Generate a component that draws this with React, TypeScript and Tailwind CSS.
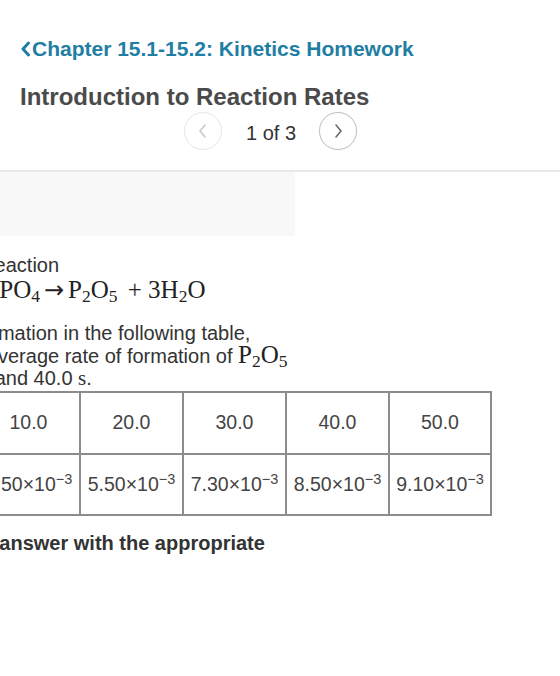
import React from "react";

function BackChevron() {
  return (
    <svg width="11" height="16" viewBox="0 0 11 16" className="shrink-0">
      <path d="M8.5 2 L3 8 L8.5 14" fill="none" stroke="#1f7ea3" strokeWidth="3" strokeLinecap="round" strokeLinejoin="round" />
    </svg>
  );
}

function PagerButton({ dir, active }: { dir: "prev" | "next"; active: boolean }) {
  const d = dir === "prev" ? "M11 5 L6 11 L11 17" : "M7 5 L12 11 L7 17";
  return (
    <div
      className={
        active
          ? "w-[38px] h-[38px] rounded-full border-[1.5px] border-[#c4c4c4] flex items-center justify-center bg-white shadow-[0_0_1px_rgba(0,0,0,0.15)]"
          : "w-[38px] h-[38px] rounded-full border-[1.5px] border-[#e6e6e6] flex items-center justify-center bg-white"
      }
    >
      <svg width="18" height="22" viewBox="0 0 18 22">
        <path d={d} fill="none" stroke={active ? "#6a6a6a" : "#c8c8c8"} strokeWidth="1.6" strokeLinecap="round" strokeLinejoin="round" />
      </svg>
    </div>
  );
}

const times = ["10.0", "20.0", "30.0", "40.0", "50.0"];
const amounts = ["2.50", "5.50", "7.30", "8.50", "9.10"];

function Sub({ children }: { children: React.ReactNode }) {
  return <sub className="text-[17.5px]">{children}</sub>;
}

function Arrow() {
  return (
    <span className="inline-block w-[28px] text-center font-['DejaVu_Sans',sans-serif] text-[24px] leading-[0]">→</span>
  );
}

export default function App() {
  const serif = "font-['Liberation_Serif','Times_New_Roman',serif]";
  return (
    <div className="w-[560px] h-[676px] overflow-hidden bg-white font-['Liberation_Sans',Arial,sans-serif]">
      {/* back link */}
      <div className="pl-[20px] pt-[37px] flex items-center gap-[1px]">
        <BackChevron />
        <span className="text-[21px] font-bold leading-[24px] text-[#1f7ea3] whitespace-nowrap">
          Chapter 15.1-15.2: Kinetics Homework
        </span>
      </div>

      {/* title */}
      <h1 className="pl-[20px] mt-[22px] text-[24px] font-bold leading-[28px] text-[#4a4a4a] whitespace-nowrap">
        Introduction to Reaction Rates
      </h1>

      {/* pager */}
      <div className="mt-[1px] pl-[184px] flex items-center">
        <PagerButton dir="prev" active={false} />
        <span className="ml-[24px] mr-[23px] text-[20px] leading-[24px] text-[#333] pt-[3px]">1 of 3</span>
        <PagerButton dir="next" active={true} />
      </div>

      <div className="mt-[20px] h-[2px] bg-[#e8e8e8]" />
      <div className="w-[295px] h-[64px] bg-[#f8f8f8]" />

      {/* problem body (scrolled horizontally) */}
      <div className="mt-[18px] -ml-[133px] w-[442px] text-[20px] leading-[22.5px] text-[#333]">
        <p className="pl-[2px]">Consider the reaction</p>
        <div className={`h-[26px] leading-[26px] pl-[93px] whitespace-nowrap ${serif} text-[25px] text-[#222]`}>
          2H<Sub>3</Sub>PO<Sub>4</Sub>
          <Arrow />
          P<Sub>2</Sub>O<Sub>5</Sub>
          <span className="ml-[4px]"> + </span>3H<Sub>2</Sub>O
        </div>

        <p className="mt-[19.5px] pl-[2px]">
          Using the information in the following table, calculate the average rate of formation of{" "}
          <span className={`${serif} text-[25px] leading-[0] text-[#222] whitespace-nowrap`}>
            P<Sub>2</Sub>O<Sub>5</Sub>
          </span>{" "}
          between 10.0 and 40.0 <span className={`${serif} text-[21px] leading-[0]`}>s</span>.
        </p>

        <table className="mt-[1px] w-[622px] max-w-none border-collapse table-fixed text-[19.5px] text-[#444]">
          <colgroup>
            <col className="w-[109px]" />
            <col className="w-[103px]" />
            <col className="w-[103px]" />
            <col className="w-[103px]" />
            <col className="w-[103px]" />
            <col className="w-[102px]" />
          </colgroup>
          <tbody>
            <tr className="h-[62px]">
              <td className="border-2 border-[#8c8c8c] text-center">Time (s)</td>
              {times.map((t) => (
                <td key={t} className="border-2 border-[#8c8c8c] text-center">
                  {t}
                </td>
              ))}
            </tr>
            <tr className="h-[61px]">
              <td className="border-2 border-[#8c8c8c] text-center">[P₂O₅] (M)</td>
              {amounts.map((a) => (
                <td key={a} className="border-2 border-[#8c8c8c] text-center whitespace-nowrap">
                  {a}×10<sup className="text-[14.5px]">−3</sup>
                </td>
              ))}
            </tr>
          </tbody>
        </table>

        <p className="mt-[16px] font-bold text-[#333]">Express your answer with the appropriate</p>
      </div>
    </div>
  );
}
